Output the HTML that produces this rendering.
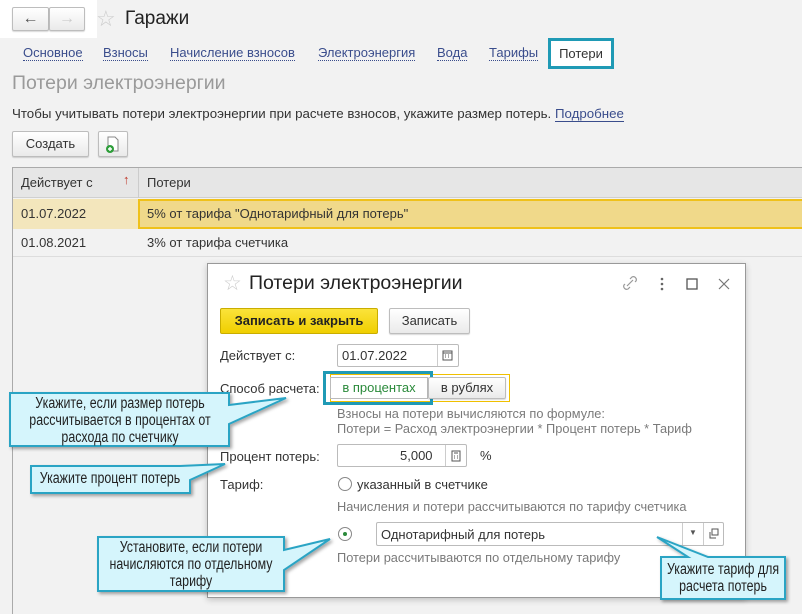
<!DOCTYPE html>
<html><head><meta charset="utf-8"><style>
*{box-sizing:border-box;margin:0;padding:0}
body{width:802px;height:614px;overflow:hidden;background:#f2f2f2;font-family:"Liberation Sans",sans-serif;font-size:13px;color:#333;position:relative}
.a{position:absolute;white-space:nowrap}
.btn{position:absolute;border:1px solid #bdbdbd;border-radius:2px;background:linear-gradient(#fff,#eaeaea);box-shadow:0 1px 1px rgba(0,0,0,.15);text-align:center}
.tab{position:absolute;top:45px;color:#3a4d8c;border-bottom:1px dotted #3a4d8c;line-height:15px}
.inp{position:absolute;background:#fff;border:1px solid #bbb;border-radius:2px}
.gray{color:#7a7a7a}
.co{position:absolute;font-size:15.5px;color:#222;text-align:center;line-height:17px;white-space:nowrap;transform:scaleX(.8);transform-origin:center top}
</style></head><body>
<div class="a" style="left:0;top:0;width:97px;height:38px;background:#fff"></div>
<div class="btn" style="left:12px;top:7px;width:37px;height:24px;font-size:16px;line-height:21px;color:#555">&#8592;</div>
<div class="btn" style="left:49px;top:7px;width:36px;height:24px;font-size:16px;line-height:21px;color:#ccc">&#8594;</div>
<div class="a" style="left:96px;top:6px;font-size:22px;color:#ccc">&#9734;</div>
<div class="a" style="left:125px;top:8px;font-size:19px;color:#222">Гаражи</div>
<div class="tab" style="left:23px">Основное</div>
<div class="tab" style="left:103px">Взносы</div>
<div class="tab" style="left:170px">Начисление взносов</div>
<div class="tab" style="left:318px">Электроэнергия</div>
<div class="tab" style="left:437px">Вода</div>
<div class="tab" style="left:489px">Тарифы</div>
<div class="a" style="left:548px;top:38px;width:66px;height:31px;border:3px solid #1f9ab5;background:#fff;text-align:center;line-height:25px;color:#333">Потери</div>
<div class="a" style="left:12px;top:72px;font-size:19.5px;color:#9a9a9a">Потери электроэнергии</div>
<div class="a" style="left:12px;top:106px;color:#333;font-size:13.3px">Чтобы учитывать потери электроэнергии при расчете взносов, укажите размер потерь. <span style="color:#3a4d8c;border-bottom:1px solid #3a4d8c">Подробнее</span></div>
<div class="btn" style="left:12px;top:131px;width:77px;height:26px;line-height:24px">Создать</div>
<div class="btn" style="left:98px;top:131px;width:30px;height:26px">
<svg width="28" height="24" viewBox="0 0 28 24"><path d="M9 5h7l3 3v11H9z" fill="#fff" stroke="#888"/><circle cx="11" cy="17" r="4" fill="#2e9e3a"/><path d="M9 17h4M11 15v4" stroke="#fff" stroke-width="1.4"/></svg></div>
<div class="a" style="left:12px;top:167px;width:790px;height:447px;border-left:1px solid #aaa;border-top:1px solid #aaa"></div>
<div class="a" style="left:13px;top:168px;width:789px;height:30px;background:#e6e6e6;border-bottom:1px solid #d0d0d0"></div>
<div class="a" style="left:138px;top:168px;width:1px;height:30px;background:#ccc"></div>
<div class="a" style="left:21px;top:175px">Действует с</div>
<div class="a" style="left:123px;top:172px;color:#c0392b;font-size:13px">&#8593;</div>
<div class="a" style="left:147px;top:175px">Потери</div>
<div class="a" style="left:13px;top:199px;width:125px;height:30px;background:#f3e6bc"></div>
<div class="a" style="left:138px;top:199px;width:664px;height:30px;background:#f0d98a;border:2px solid #efc11a;border-right:none"></div>
<div class="a" style="left:21px;top:206px">01.07.2022</div>
<div class="a" style="left:147px;top:206px">5% от тарифа "Однотарифный для потерь"</div>
<div class="a" style="left:13px;top:256px;width:789px;height:1px;background:#ddd"></div>
<div class="a" style="left:21px;top:235px">01.08.2021</div>
<div class="a" style="left:147px;top:235px">3% от тарифа счетчика</div>

<div class="a" style="left:207px;top:263px;width:539px;height:335px;background:#fff;border:1px solid #999;box-shadow:0 2px 6px rgba(0,0,0,.2)"></div>
<div class="a" style="left:223px;top:271px;font-size:21px;color:#ccc">&#9734;</div>
<div class="a" style="left:249px;top:272px;font-size:19.5px;color:#222">Потери электроэнергии</div>
<svg class="a" style="left:620px;top:274px" width="115" height="20" viewBox="0 0 115 20"><path d="M7 12l6-6M5 10l-1 1a3 3 0 004 4l2-2M15 8l1-1a3 3 0 00-4-4l-2 2" stroke="#999" fill="none" stroke-width="1.2"/><circle cx="42" cy="5" r="1.3" fill="#666"/><circle cx="42" cy="10" r="1.3" fill="#666"/><circle cx="42" cy="15" r="1.3" fill="#666"/><rect x="67" y="5" width="10" height="10" fill="none" stroke="#555" stroke-width="1.3"/><path d="M99 5l10 10M109 5l-10 10" stroke="#777" stroke-width="1.2"/></svg>
<div class="a" style="left:220px;top:308px;width:158px;height:26px;background:linear-gradient(#fbe33a,#f0cf00);border:1px solid #c9ad00;border-radius:2px;text-align:center;line-height:24px;font-weight:bold;font-size:13px;color:#222">Записать и закрыть</div>
<div class="btn" style="left:389px;top:308px;width:81px;height:26px;line-height:24px">Записать</div>
<div class="a" style="left:220px;top:348px">Действует с:</div>
<div class="inp" style="left:337px;top:344px;width:122px;height:23px"></div>
<div class="a" style="left:437px;top:345px;width:1px;height:21px;background:#ccc"></div>
<div class="a" style="left:342px;top:348px">01.07.2022</div>
<svg class="a" style="left:442px;top:350px" width="12" height="11"><rect x="1" y="1" width="9" height="9" fill="none" stroke="#555"/><path d="M1 3h9M3 5h1M6 5h1M3 7h1M6 7h1" stroke="#555"/></svg>
<div class="a" style="left:220px;top:381px">Способ расчета:</div>
<div class="a" style="left:330px;top:374px;width:180px;height:28px;border:1px solid #f0c000"></div>
<div class="a" style="left:323px;top:371px;width:110px;height:34px;border:3px solid #1f9ab5"></div>
<div class="a" style="left:330px;top:377px;width:98px;height:22px;background:#fff;border:1px solid #bbb;text-align:center;line-height:20px;color:#2a8a3a">в процентах</div>
<div class="btn" style="left:428px;top:377px;width:78px;height:22px;line-height:20px">в рублях</div>
<div class="a gray" style="left:337px;top:406px;font-size:12.8px">Взносы на потери вычисляются по формуле:</div>
<div class="a gray" style="left:337px;top:421px;font-size:12.8px">Потери = Расход электроэнергии * Процент потерь * Тариф</div>
<div class="a" style="left:220px;top:449px">Процент потерь:</div>
<div class="inp" style="left:337px;top:444px;width:130px;height:23px"></div>
<div class="a" style="left:445px;top:445px;width:1px;height:21px;background:#ccc"></div>
<div class="a" style="left:400px;top:448px">5,000</div>
<svg class="a" style="left:451px;top:450px" width="10" height="12"><rect x="1" y="1" width="8" height="10" fill="none" stroke="#555"/><path d="M3 3h4M3 6h1M6 6h1M3 8h1M6 8h1" stroke="#555"/></svg>
<div class="a" style="left:480px;top:448px">%</div>
<div class="a" style="left:220px;top:477px">Тариф:</div>
<div class="a" style="left:338px;top:477px;width:14px;height:14px;border:1px solid #888;border-radius:50%;background:#fff"></div>
<div class="a" style="left:357px;top:477px">указанный в счетчике</div>
<div class="a gray" style="left:337px;top:499px;font-size:12.8px">Начисления и потери рассчитываются по тарифу счетчика</div>
<div class="a" style="left:338px;top:527px;width:14px;height:14px;border:1px solid #888;border-radius:50%;background:#fff"></div>
<div class="a" style="left:343px;top:532px;width:4px;height:4px;border-radius:50%;background:#2a8a3a"></div>
<div class="inp" style="left:376px;top:522px;width:348px;height:24px"></div>
<div class="a" style="left:682px;top:523px;width:1px;height:22px;background:#ccc"></div>
<div class="a" style="left:703px;top:523px;width:1px;height:22px;background:#ccc"></div>
<div class="a" style="left:381px;top:527px">Однотарифный для потерь</div>
<div class="a" style="left:689px;top:528px;font-size:8px;color:#555">&#9660;</div>
<svg class="a" style="left:708px;top:528px" width="11" height="11"><rect x="4" y="1" width="6" height="6" fill="none" stroke="#555"/><path d="M2 4v6h6" fill="none" stroke="#555"/></svg>
<div class="a gray" style="left:337px;top:550px;font-size:12.8px">Потери рассчитываются по отдельному тарифу</div>

<svg class="a" style="left:0;top:0" width="802" height="614">
<defs><filter id="s"><feDropShadow dx="2" dy="2" stdDeviation="1.5" flood-opacity=".35"/></filter></defs>
<g fill="#d5f5fc" stroke="#2aa4c4" stroke-width="2" filter="url(#s)">
<path d="M10 393H229V405L286 398L229 424V446H10Z"/>
<path d="M31 466H180L225 464L190 480V493H31Z"/>
<path d="M98 537H284V550L330 539L284 570V591H98Z"/>
<path d="M661 557H688L657 537L708 557H785V599H661Z"/>
</g></svg>
<div class="co" style="left:-10px;top:395px;width:260px">Укажите, если размер потерь<br>рассчитывается в процентах от<br>расхода по счетчику</div>
<div class="co" style="left:20px;top:470px;width:180px">Укажите процент потерь</div>
<div class="co" style="left:76px;top:539px;width:230px">Установите, если потери<br>начисляются по отдельному<br>тарифу</div>
<div class="co" style="left:643px;top:561px;width:160px">Укажите тариф для<br>расчета потерь</div>
</body></html>
